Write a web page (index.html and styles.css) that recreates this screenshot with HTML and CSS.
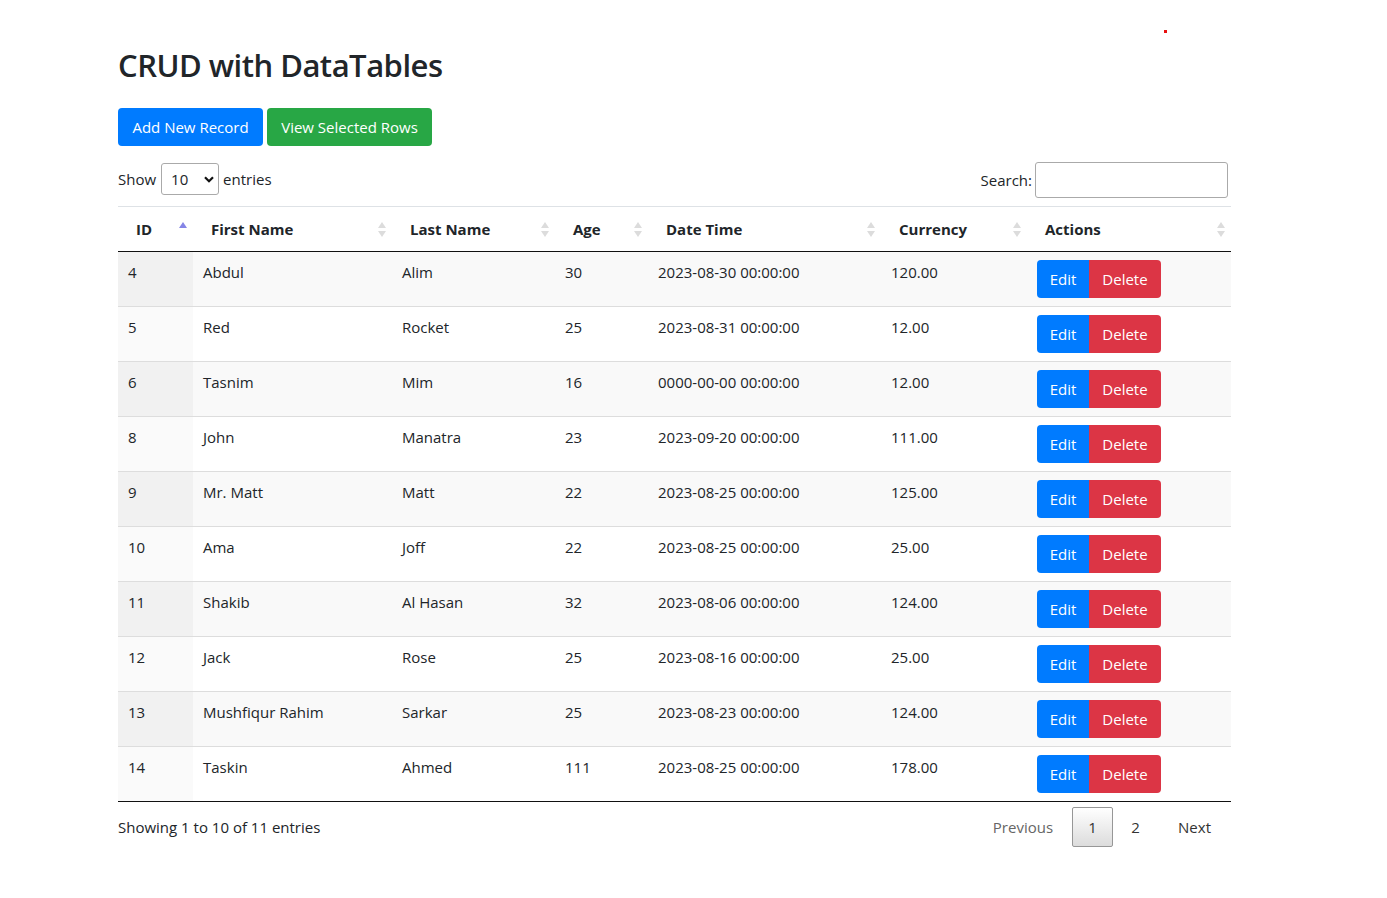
FILE: index.html
```html
<!DOCTYPE html>
<html>
<head>
<meta charset="utf-8">
<title>CRUD with DataTables</title>
<link rel="stylesheet" href="styles.css">
</head>
<body>
<span class="dot"></span>
<div class="container">
  <h1 class="title">CRUD with DataTables</h1>
  <div class="actions">
    <button class="btn btn-primary">Add New Record</button>
    <button class="btn btn-success">View Selected Rows</button>
  </div>
  <div class="controls">
    <label class="length">Show
      <span class="select"><span>10</span><svg width="10" height="7" viewBox="0 0 10 7"><path d="M1 1.2 L5 5.2 L9 1.2" fill="none" stroke="#111" stroke-width="2.2"/></svg></span>
      entries</label>
    <label class="filter">Search:<span class="search-input"></span></label>
  </div>
  <table class="data">
    <colgroup>
      <col style="width:75px"><col style="width:199px"><col style="width:163px"><col style="width:93px"><col style="width:233px"><col style="width:146px"><col style="width:204px">
    </colgroup>
    <thead>
      <tr>
        <th class="sort-asc">ID</th>
        <th class="sort-both">First Name</th>
        <th class="sort-both">Last Name</th>
        <th class="sort-both">Age</th>
        <th class="sort-both">Date Time</th>
        <th class="sort-both">Currency</th>
        <th class="sort-both">Actions</th>
      </tr>
    </thead>
    <tbody>
      <tr><td>4</td><td>Abdul</td><td>Alim</td><td>30</td><td>2023-08-30 00:00:00</td><td>120.00</td><td><span class="btn btn-primary sm">Edit</span><span class="btn btn-danger sm">Delete</span></td></tr>
      <tr><td>5</td><td>Red</td><td>Rocket</td><td>25</td><td>2023-08-31 00:00:00</td><td>12.00</td><td><span class="btn btn-primary sm">Edit</span><span class="btn btn-danger sm">Delete</span></td></tr>
      <tr><td>6</td><td>Tasnim</td><td>Mim</td><td>16</td><td>0000-00-00 00:00:00</td><td>12.00</td><td><span class="btn btn-primary sm">Edit</span><span class="btn btn-danger sm">Delete</span></td></tr>
      <tr><td>8</td><td>John</td><td>Manatra</td><td>23</td><td>2023-09-20 00:00:00</td><td>111.00</td><td><span class="btn btn-primary sm">Edit</span><span class="btn btn-danger sm">Delete</span></td></tr>
      <tr><td>9</td><td>Mr. Matt</td><td>Matt</td><td>22</td><td>2023-08-25 00:00:00</td><td>125.00</td><td><span class="btn btn-primary sm">Edit</span><span class="btn btn-danger sm">Delete</span></td></tr>
      <tr><td>10</td><td>Ama</td><td>Joff</td><td>22</td><td>2023-08-25 00:00:00</td><td>25.00</td><td><span class="btn btn-primary sm">Edit</span><span class="btn btn-danger sm">Delete</span></td></tr>
      <tr><td>11</td><td>Shakib</td><td>Al Hasan</td><td>32</td><td>2023-08-06 00:00:00</td><td>124.00</td><td><span class="btn btn-primary sm">Edit</span><span class="btn btn-danger sm">Delete</span></td></tr>
      <tr><td>12</td><td>Jack</td><td>Rose</td><td>25</td><td>2023-08-16 00:00:00</td><td>25.00</td><td><span class="btn btn-primary sm">Edit</span><span class="btn btn-danger sm">Delete</span></td></tr>
      <tr><td>13</td><td>Mushfiqur Rahim</td><td>Sarkar</td><td>25</td><td>2023-08-23 00:00:00</td><td>124.00</td><td><span class="btn btn-primary sm">Edit</span><span class="btn btn-danger sm">Delete</span></td></tr>
      <tr><td>14</td><td>Taskin</td><td>Ahmed</td><td>111</td><td>2023-08-25 00:00:00</td><td>178.00</td><td><span class="btn btn-primary sm">Edit</span><span class="btn btn-danger sm">Delete</span></td></tr>
    </tbody>
  </table>
  <div class="footer">
    <div class="info">Showing 1 to 10 of 11 entries</div>
    <div class="paginate">
      <span class="page prev disabled">Previous</span>
      <span class="page num current">1</span>
      <span class="page num">2</span>
      <span class="page">Next</span>
    </div>
  </div>
</div>
</body>
</html>
```

FILE: styles.css
```css
html, body {
  margin: 0;
  padding: 0;
  background: #fff;
}
body {
  font-family: "Open Sans", "Noto Sans", sans-serif;
  font-size: 15px;
  line-height: 24px;
  color: #212529;
}
.dot {
  position: absolute;
  left: 1164px;
  top: 30px;
  width: 3px;
  height: 3px;
  background: #e81010;
}
.container {
  width: 1113px;
  margin-left: 118px;
  padding-top: 41px;
}
.title {
  margin: 0 0 19px;
  font-size: 31px;
  line-height: 48px;
  font-weight: 600;
  letter-spacing: -0.5px;
}
.actions {
  display: flex;
  gap: 4px;
}
.btn {
  display: inline-flex;
  align-items: center;
  justify-content: center;
  height: 38px;
  box-sizing: border-box;
  padding: 0 12px;
  border: 0;
  border-radius: 4px;
  color: #fff;
  font-family: inherit;
  font-size: 15px;
}
.btn-primary { background: #007bff; }
.btn-success { background: #28a745; }
.btn-danger { background: #dc3545; }
.actions .btn-primary { width: 145px; }
.actions .btn-success { width: 165px; }
.controls {
  display: flex;
  justify-content: space-between;
  align-items: flex-start;
  margin-top: 16px;
  padding-right: 3px;
  height: 36px;
}
.length, .filter {
  display: flex;
  align-items: center;
  gap: 4px;
}
.length { height: 32px; margin-left: 0; padding-top: 1px; }
.filter { height: 36px; }
.select {
  display: inline-flex;
  align-items: center;
  justify-content: space-between;
  box-sizing: border-box;
  width: 58px;
  height: 32px;
  margin-left: 1px;
  padding: 0 4px 0 9px;
  border: 1px solid #aaa;
  border-radius: 3px;
}
.search-input {
  display: inline-block;
  box-sizing: border-box;
  width: 193px;
  height: 36px;
  margin-left: -1px;
  border: 1px solid #aaa;
  border-radius: 3px;
}
.data {
  margin-top: 8px;
  width: 1113px;
  border-collapse: collapse;
  table-layout: fixed;
}
.data thead th {
  position: relative;
  text-align: left;
  font-weight: 700;
  padding: 10px 18px;
  height: 24px;
  border-top: 1px solid #dee2e6;
  border-bottom: 1px solid #111;
  white-space: nowrap;
}
.data th::before, .data th::after {
  content: "";
  position: absolute;
  right: 6px;
  width: 0;
  height: 0;
  border-left: 4px solid transparent;
  border-right: 4px solid transparent;
}
.sort-both::before {
  top: 15px;
  border-bottom: 6px solid #dcdcdc;
}
.sort-both::after {
  top: 24px;
  border-top: 6px solid #dcdcdc;
}
.sort-asc::before {
  top: 15px;
  border-bottom: 6px solid #8585e6;
}
.sort-asc::after { display: none; }
.data tbody td {
  padding: 8px 10px;
  height: 38px;
  vertical-align: top;
  border-top: 1px solid #ddd;
  white-space: nowrap;
}
.data tbody tr:first-child td { border-top: 0; }
.data tbody tr:last-child td { border-bottom: 1px solid #111; }
.data tbody tr:nth-child(odd) { background: #f9f9f9; }
.data tbody tr:nth-child(odd) td:first-child { background: #f1f1f1; }
.data tbody tr:nth-child(even) td:first-child { background: #fafafa; }
.btn.sm:first-child {
  width: 52px;
  border-radius: 4px 0 0 4px;
}
.btn.sm + .btn.sm {
  width: 72px;
  border-radius: 0 4px 4px 0;
}
.footer {
  display: flex;
  justify-content: space-between;
  align-items: flex-start;
}
.info {
  padding-top: 13px;
}
.paginate {
  display: flex;
  padding-top: 5px;
}
.page {
  display: inline-flex;
  align-items: center;
  justify-content: center;
  box-sizing: border-box;
  height: 40px;
  padding: 0 19px;
  margin-left: 2px;
  border: 1px solid transparent;
  border-radius: 2px;
  color: #333;
}
.page.prev { padding-right: 16px; }
.page.num {
  width: 41px;
  padding: 0;
}
.page.disabled { color: #666; }
.page.current {
  border-color: #979797;
  background: linear-gradient(to bottom, #fff 0%, #dcdcdc 100%);
}
```
